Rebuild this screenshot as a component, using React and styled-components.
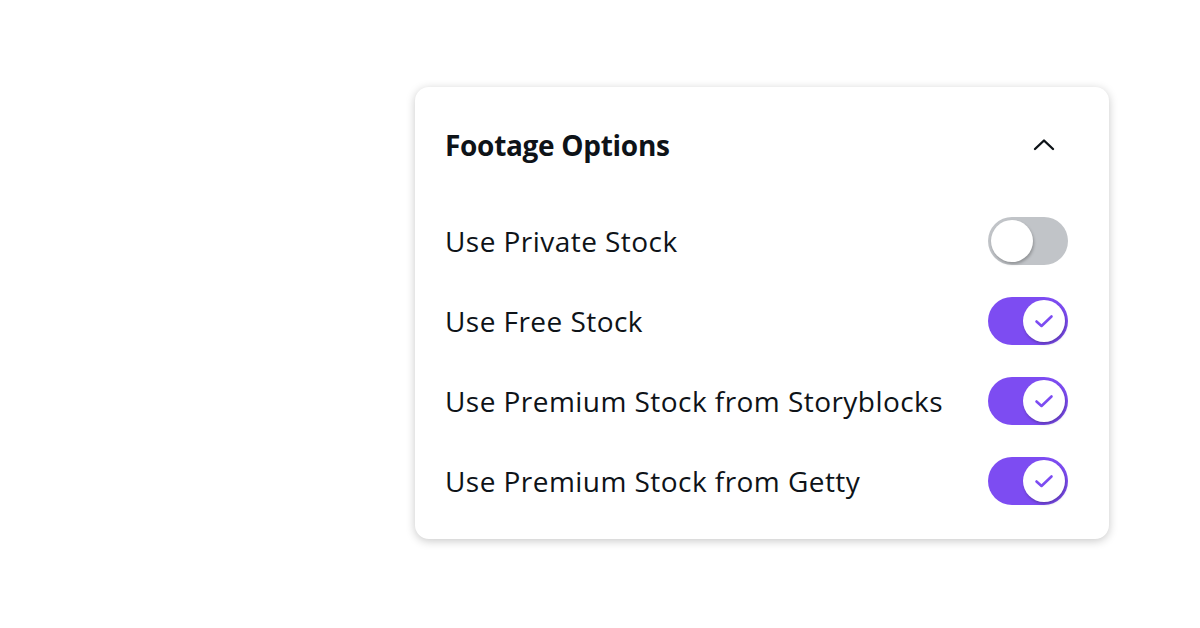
import styled, { createGlobalStyle } from 'styled-components';

const options = [
  { id: 'private', label: 'Use Private Stock', on: false },
  { id: 'free', label: 'Use Free Stock', on: true },
  { id: 'storyblocks', label: 'Use Premium Stock from Storyblocks', on: true },
  { id: 'getty', label: 'Use Premium Stock from Getty', on: true },
];

export default function App() {
  return (
    <>
      <GlobalStyle />
      <Page>
        <Card>
          <Header>
            <Title>Footage Options</Title>
            <Chevron viewBox="0 0 24 24">
              <path d="M3 16 L12 7.5 L21 16" />
            </Chevron>
          </Header>
          <List>
            {options.map(({ id, label, on }) => (
              <OptionRow key={id}>
                <Label>{label}</Label>
                <Toggle on={on} />
              </OptionRow>
            ))}
          </List>
        </Card>
      </Page>
    </>
  );
}

function Toggle({ on }) {
  return (
    <Track $on={on}>
      <Knob $on={on}>
        {on && (
          <svg width="24" height="24" viewBox="0 0 24 24">
            <path d="M4.5 12.5 L9.5 17 L19.5 7.5" fill="none" stroke="#7d4cf2" strokeWidth="2.6" strokeLinecap="round" strokeLinejoin="round" />
          </svg>
        )}
      </Knob>
    </Track>
  );
}

const GlobalStyle = createGlobalStyle`
  html, body {
    margin: 0;
    background: #ffffff;
  }
`;

const Page = styled.div`
  width: 1200px;
  height: 628px;
  padding: 87px 0 0 415px;
  box-sizing: border-box;
  font-family: 'Open Sans', 'Noto Sans', sans-serif;
  color: #0e1318;
`;

const Card = styled.section`
  width: 694px;
  height: 452px;
  box-sizing: border-box;
  padding: 30px 41px 18px 30px;
  background: #ffffff;
  border-radius: 14px;
  box-shadow: 0 2px 10px rgba(0, 0, 0, 0.22);
`;

const Header = styled.div`
  height: 56px;
  display: flex;
  align-items: center;
  justify-content: space-between;
  padding-right: 12px;
  margin-bottom: 28px;
`;

const Title = styled.h2`
  margin: 0;
  font-size: 28px;
  font-weight: 700;
  letter-spacing: -0.3px;
`;

const Chevron = styled.svg`
  width: 24px;
  height: 24px;
  fill: none;
  stroke: #0e1318;
  stroke-width: 2.4;
  stroke-linecap: round;
  stroke-linejoin: round;
`;

const List = styled.div`
  display: flex;
  flex-direction: column;
`;

const OptionRow = styled.div`
  height: 80px;
  display: flex;
  align-items: center;
  justify-content: space-between;
`;

const Label = styled.span`
  font-size: 28px;
  font-weight: 400;
  letter-spacing: 0.45px;
`;

const Track = styled.div`
  width: 80px;
  height: 48px;
  box-sizing: border-box;
  padding: 3px;
  border-radius: 24px;
  background: ${props => (props.$on ? '#7d4cf2' : '#c1c4c8')};
  display: flex;
  justify-content: ${props => (props.$on ? 'flex-end' : 'flex-start')};
  align-items: center;
`;

const Knob = styled.div`
  width: 42px;
  height: 42px;
  border-radius: 50%;
  background: #ffffff;
  display: flex;
  align-items: center;
  justify-content: center;
  box-shadow: 1px 2px 3px rgba(0, 0, 0, 0.25);
`;
